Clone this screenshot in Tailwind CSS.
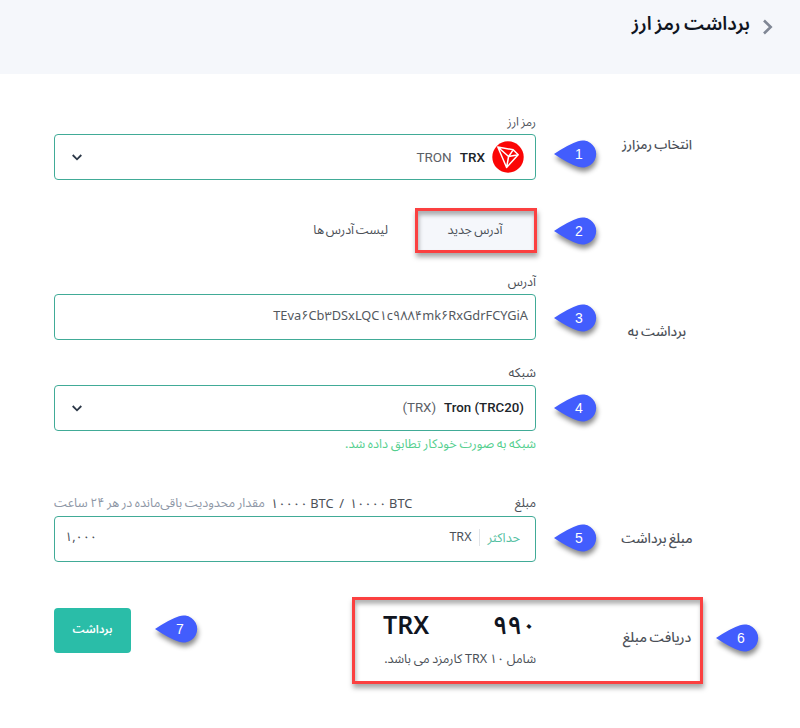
<!DOCTYPE html>
<html lang="fa" dir="rtl">
<head>
<meta charset="utf-8">
<title>برداشت رمز ارز</title>
<script src="https://cdn.jsdelivr.net/npm/@tailwindcss/browser@4"></script>
</head>
<body class="relative w-[800px] h-[728px] overflow-hidden bg-white text-[#4b5058] font-['Noto_Sans','Noto_Sans_Arabic','DejaVu_Sans',sans-serif] text-[12.5px] whitespace-nowrap">
<header class="h-[74px] bg-[#f5f7fb]">
  <div class="flex items-center h-[50px] pr-[26px]">
    <svg class="w-[12px] h-[18px] ml-[12px] mt-[4px]" viewBox="0 0 12 18" fill="none" stroke="#808795" stroke-width="2.6"><path d="M2 2.5 8.7 9 2 15.5"/></svg>
    <h1 class="text-[19px] font-semibold text-[#10151f] [word-spacing:-1.5px] pb-[3px]">برداشت رمز ارز</h1>
  </div>
</header>

<main class="pr-[22px]">
  <section class="flex h-[107px] pt-[39px]">
    <div class="w-[242px] h-[63px] flex items-center justify-center text-[13.2px] font-medium [word-spacing:-1px]">انتخاب رمزارز</div>
    <div class="w-[482px]">
      <div class="h-[21px] leading-[17px] text-[12px] [word-spacing:-1px]">رمز ارز</div>
      <div class="h-[46px] mb-px border border-[#41ab97] rounded-[4px] flex items-center pr-[11px] pl-[17px] font-[Roboto]">
        <svg class="w-[32px] h-[32px]" viewBox="0 0 32 32"><circle cx="16" cy="16" r="15.7" fill="#fb0505"/><path d="M5.800 6 21.200 8.800 26.200 13.700 14.600 26.500ZM5.800 6 16.600 15.500 14.600 26.500M16.600 15.500 26.200 13.700M16.600 15.500 21.200 8.800" fill="none" stroke="#fff" stroke-width="1.5" stroke-linejoin="round"/></svg>
        <span class="mr-[7px] text-[13.5px] font-medium text-[#20252a]">TRX</span>
        <span class="mr-[8px] text-[13.5px] text-[#5b6066]">TRON</span>
        <svg class="mr-auto w-[10px] h-[7px]" viewBox="0 0 10 7" fill="none" stroke="#2c3848" stroke-width="1.8"><path d="M.7 1 5 5.3 9.3 1"/></svg>
      </div>
    </div>
  </section>

  <section class="flex h-[92px] pt-[27px] pr-[241px]">
    <div class="w-[122px] h-[45px] border-[3px] border-[#fb4040] bg-[#f5f7fb] flex items-center justify-center pr-[2px] [word-spacing:-1px] shadow-[1px_4px_5px_rgba(0,0,0,.35),inset_1px_4px_4px_rgba(0,0,0,.3)]">آدرس جدید</div>
    <div class="mr-[27px] h-[45px] flex items-center [word-spacing:-1.5px]">لیست آدرس ها</div>
  </section>

  <section class="flex h-[221px]">
    <div class="w-[242px] h-[117px] flex items-center justify-center text-[13.5px] font-medium [word-spacing:-1px]">برداشت به</div>
    <div class="w-[482px]">
      <div class="h-[21px] leading-[17px]">آدرس</div>
      <div dir="ltr" class="h-[46px] mb-px border border-[#41ab97] rounded-[4px] flex items-center justify-end pr-[7px] pb-[3px] text-[12.8px] text-[#53585e]">TEva۶Cb۳DSxLQC۱c۹۸۸۴mk۶RxGdrFCYGiA</div>
      <div class="h-[44px] pt-[23px] leading-[17px] text-[13px]">شبکه</div>
      <div class="h-[46px] mb-px border border-[#41ab97] rounded-[4px] flex items-center pr-[11px] pl-[17px] font-[Roboto]">
        <bdi dir="ltr" class="text-[13.3px] font-medium text-[#20252a]">Tron (TRC20)</bdi>
        <bdi dir="ltr" class="mr-[8px] text-[13.3px] text-[#5b6066]">(TRX)</bdi>
        <svg class="mr-auto w-[10px] h-[7px]" viewBox="0 0 10 7" fill="none" stroke="#2c3848" stroke-width="1.8"><path d="M.7 1 5 5.3 9.3 1"/></svg>
      </div>
      <div class="leading-[23px] text-[12.7px] text-[#55cf8f] [word-spacing:-0.6px]">شبکه به صورت خودکار تطابق داده شد.</div>
    </div>
  </section>

  <section class="flex h-[104px]">
    <div class="w-[242px] h-[88px] flex items-center justify-center text-[13.5px] font-medium [word-spacing:-1px]">مبلغ برداشت</div>
    <div class="w-[482px]">
      <div class="h-[22px] leading-[18px] flex">
        <span>مبلغ</span>
        <bdi dir="ltr" class="mr-auto text-[12.8px] [word-spacing:-0.5px]"><span class="tracking-[3.2px]">۱۰۰۰۰</span> BTC&nbsp; /&nbsp; <span class="tracking-[3.2px]">۱۰۰۰۰</span> BTC</bdi>
        <span class="mr-[6px] text-[12.600px] text-[#8e97a6] [word-spacing:-0.8px]">مقدار محدودیت باقی‌مانده در هر ۲۴ ساعت</span>
      </div>
      <div class="h-[46px] mb-px border border-[#41ab97] rounded-[4px] flex items-center pl-[10px] pr-[15px] pb-[3px]">
        <span class="text-[12.800px] text-[#55c0a2]">حداکثر</span>
        <span class="mr-[7px] h-[17px] w-px bg-[#e1e4e8]"></span>
        <span class="mr-[8px]">TRX</span>
        <bdi dir="ltr" class="mr-auto tracking-[2.6px]">۱,۰۰۰</bdi>
      </div>
    </div>
  </section>

  <section class="flex">
    <div class="w-[242px] h-[79px] flex items-center justify-center text-[13.8px] font-medium [word-spacing:-1px]">دریافت مبلغ</div>
    <div class="w-[153px] pt-[9px]">
      <div class="flex justify-between h-[36px] items-center font-semibold text-[25px] text-[#10151f]"><span class="tracking-[6px]">۹۹۰</span><span>TRX</span></div>
      <div class="leading-[32px] text-[12.500px] [word-spacing:-0.5px]">شامل ۱۰ TRX کارمزد می باشد.</div>
    </div>
    <div class="mr-auto ml-[54px] mt-[10px]"><button class="block w-[77px] h-[45px] rounded-[4px] bg-[#2abda8] text-white font-semibold text-[11.5px] pb-[4px]">برداشت</button></div>
  </section>
</main>

<div class="absolute left-[352px] top-[597px] w-[351px] h-[87px] border-[3px] border-[#fb4040] shadow-[1px_4px_5px_rgba(0,0,0,.35),inset_1px_4px_4px_rgba(0,0,0,.3)]"></div>

<svg width="0" height="0" class="absolute"><defs><path id="pin" d="M0 14Q14 4.500 24 1.200A13.600 13.600 0 1 1 24 26.800Q14 23.500 0 14Z" fill="#425dfd"/></defs></svg>
<div dir="ltr" class="font-['Liberation_Sans'] text-white text-[14px]">
  <div class="absolute left-[554px] top-[140px] w-[44px] h-[28px] flex items-center pl-[21px]"><svg class="absolute inset-0 overflow-visible drop-shadow-[1px_4px_2.5px_rgba(0,0,0,.45)]" width="44" height="28"><use href="#pin"/></svg><span class="relative">1</span></div>
  <div class="absolute left-[554px] top-[217px] w-[44px] h-[28px] flex items-center pl-[21px]"><svg class="absolute inset-0 overflow-visible drop-shadow-[1px_4px_2.5px_rgba(0,0,0,.45)]" width="44" height="28"><use href="#pin"/></svg><span class="relative">2</span></div>
  <div class="absolute left-[554px] top-[304px] w-[44px] h-[28px] flex items-center pl-[21px]"><svg class="absolute inset-0 overflow-visible drop-shadow-[1px_4px_2.5px_rgba(0,0,0,.45)]" width="44" height="28"><use href="#pin"/></svg><span class="relative">3</span></div>
  <div class="absolute left-[554px] top-[394px] w-[44px] h-[28px] flex items-center pl-[21px]"><svg class="absolute inset-0 overflow-visible drop-shadow-[1px_4px_2.5px_rgba(0,0,0,.45)]" width="44" height="28"><use href="#pin"/></svg><span class="relative">4</span></div>
  <div class="absolute left-[554px] top-[524px] w-[44px] h-[28px] flex items-center pl-[21px]"><svg class="absolute inset-0 overflow-visible drop-shadow-[1px_4px_2.5px_rgba(0,0,0,.45)]" width="44" height="28"><use href="#pin"/></svg><span class="relative">5</span></div>
  <div class="absolute left-[716px] top-[624px] w-[44px] h-[28px] flex items-center pl-[21px]"><svg class="absolute inset-0 overflow-visible drop-shadow-[1px_4px_2.5px_rgba(0,0,0,.45)]" width="44" height="28"><use href="#pin"/></svg><span class="relative">6</span></div>
  <div class="absolute left-[155px] top-[615px] w-[44px] h-[28px] flex items-center pl-[21px]"><svg class="absolute inset-0 overflow-visible drop-shadow-[1px_4px_2.5px_rgba(0,0,0,.45)]" width="44" height="28"><use href="#pin"/></svg><span class="relative">7</span></div>
</div>
</body>
</html>
